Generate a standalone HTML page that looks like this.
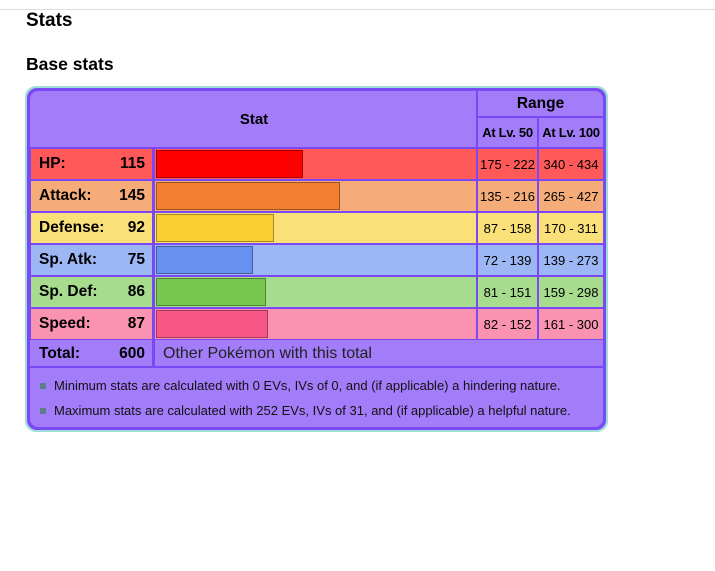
<!DOCTYPE html>
<html><head><meta charset="utf-8"><style>
*{margin:0;padding:0;box-sizing:border-box}
body{width:715px;height:571px;background:#fff;font-family:"Liberation Sans",Arial,sans-serif;position:relative;overflow:hidden;color:#000}
.a{position:absolute}
.c{position:absolute;display:flex;align-items:center}
.b{font-weight:bold}
.r{font-size:13px}
.l{font-size:15.5px}
</style></head><body>
<div class="a" style="left:0;top:9px;width:715px;height:1px;background:#ddd"></div>
<div class="a b" style="left:26px;top:10px;font-size:19px">Stats</div>
<div class="a b" style="left:26px;top:54px;font-size:17.5px">Base stats</div>

<div class="a" style="left:25px;top:86px;width:583px;height:346px;border-radius:11px;background:#a0dcd8"></div>
<div class="a" style="left:27px;top:88px;width:579px;height:342px;border-radius:10px;background:#7a48f5"></div>
<div class="a" style="left:30px;top:91px;width:573px;height:336px;border-radius:8px;background:#a37cf9"></div>

<div class="a" style="left:476px;top:89px;width:2px;height:59px;background:#7a48f5"></div>
<div class="a" style="left:478px;top:116px;width:127px;height:2px;background:#7a48f5"></div>
<div class="a" style="left:537px;top:118px;width:2px;height:30px;background:#7a48f5"></div>
<div class="c b" style="left:30px;top:91px;width:446px;height:56px;justify-content:center;font-size:15px;padding-left:2px">Stat</div>
<div class="c b" style="left:478px;top:91px;width:125px;height:25px;justify-content:center;font-size:15.5px">Range</div>
<div class="c b" style="left:478px;top:118px;width:59px;height:29px;justify-content:center;font-size:13px;letter-spacing:-0.3px">At Lv. 50</div>
<div class="c b" style="left:539px;top:118px;width:64px;height:29px;justify-content:center;font-size:13px;letter-spacing:-0.3px">At Lv. 100</div>

<div class="a" style="left:28px;top:147px;width:577px;height:193px;background:#7a48f5"></div>

<div class="a" style="left:31px;top:149px;width:121px;height:30px;background:#ff5959"></div>
<div class="a" style="left:155px;top:149px;width:321px;height:30px;background:#ff5959"></div>
<div class="a" style="left:478px;top:149px;width:59px;height:30px;background:#ff5959"></div>
<div class="a" style="left:539px;top:149px;width:64px;height:30px;background:#ff5959"></div>
<div class="a" style="left:156px;top:150px;width:147px;height:28px;background:#f00;border:1px solid #a00"></div>

<div class="a" style="left:31px;top:181px;width:121px;height:30px;background:#f5ac78"></div>
<div class="a" style="left:155px;top:181px;width:321px;height:30px;background:#f5ac78"></div>
<div class="a" style="left:478px;top:181px;width:59px;height:30px;background:#f5ac78"></div>
<div class="a" style="left:539px;top:181px;width:64px;height:30px;background:#f5ac78"></div>
<div class="a" style="left:156px;top:182px;width:184px;height:28px;background:#f08030;border:1px solid #9c531f"></div>

<div class="a" style="left:31px;top:213px;width:121px;height:30px;background:#fae078"></div>
<div class="a" style="left:155px;top:213px;width:321px;height:30px;background:#fae078"></div>
<div class="a" style="left:478px;top:213px;width:59px;height:30px;background:#fae078"></div>
<div class="a" style="left:539px;top:213px;width:64px;height:30px;background:#fae078"></div>
<div class="a" style="left:156px;top:214px;width:118px;height:28px;background:#f8d030;border:1px solid #a1871f"></div>

<div class="a" style="left:31px;top:245px;width:121px;height:30px;background:#9db7f5"></div>
<div class="a" style="left:155px;top:245px;width:321px;height:30px;background:#9db7f5"></div>
<div class="a" style="left:478px;top:245px;width:59px;height:30px;background:#9db7f5"></div>
<div class="a" style="left:539px;top:245px;width:64px;height:30px;background:#9db7f5"></div>
<div class="a" style="left:156px;top:246px;width:97px;height:28px;background:#6890f0;border:1px solid #445e9c"></div>

<div class="a" style="left:31px;top:277px;width:121px;height:30px;background:#a7db8d"></div>
<div class="a" style="left:155px;top:277px;width:321px;height:30px;background:#a7db8d"></div>
<div class="a" style="left:478px;top:277px;width:59px;height:30px;background:#a7db8d"></div>
<div class="a" style="left:539px;top:277px;width:64px;height:30px;background:#a7db8d"></div>
<div class="a" style="left:156px;top:278px;width:110px;height:28px;background:#78c850;border:1px solid #4e8234"></div>

<div class="a" style="left:31px;top:309px;width:121px;height:30px;background:#fa92b2"></div>
<div class="a" style="left:155px;top:309px;width:321px;height:30px;background:#fa92b2"></div>
<div class="a" style="left:478px;top:309px;width:59px;height:30px;background:#fa92b2"></div>
<div class="a" style="left:539px;top:309px;width:64px;height:30px;background:#fa92b2"></div>
<div class="a" style="left:156px;top:310px;width:112px;height:28px;background:#f85888;border:1px solid #a13959"></div>

<div class="c b l" style="left:39px;top:149px;height:30px">HP:</div>
<div class="c b l" style="left:39px;top:181px;height:30px">Attack:</div>
<div class="c b l" style="left:39px;top:213px;height:30px">Defense:</div>
<div class="c b l" style="left:39px;top:245px;height:30px">Sp. Atk:</div>
<div class="c b l" style="left:39px;top:277px;height:30px">Sp. Def:</div>
<div class="c b l" style="left:39px;top:309px;height:30px">Speed:</div>
<div class="c b l" style="left:39px;top:341px;height:26px">Total:</div>

<div class="c b l" style="left:90px;width:55px;justify-content:flex-end;top:149px;height:30px">115</div>
<div class="c b l" style="left:90px;width:55px;justify-content:flex-end;top:181px;height:30px">145</div>
<div class="c b l" style="left:90px;width:55px;justify-content:flex-end;top:213px;height:30px">92</div>
<div class="c b l" style="left:90px;width:55px;justify-content:flex-end;top:245px;height:30px">75</div>
<div class="c b l" style="left:90px;width:55px;justify-content:flex-end;top:277px;height:30px">86</div>
<div class="c b l" style="left:90px;width:55px;justify-content:flex-end;top:309px;height:30px">87</div>
<div class="c b l" style="left:90px;width:55px;justify-content:flex-end;top:341px;height:26px">600</div>

<div class="c r" style="left:478px;width:59px;justify-content:center;top:149px;height:30px">175 - 222</div>
<div class="c r" style="left:539px;width:64px;justify-content:center;top:149px;height:30px">340 - 434</div>
<div class="c r" style="left:478px;width:59px;justify-content:center;top:181px;height:30px">135 - 216</div>
<div class="c r" style="left:539px;width:64px;justify-content:center;top:181px;height:30px">265 - 427</div>
<div class="c r" style="left:478px;width:59px;justify-content:center;top:213px;height:30px">87 - 158</div>
<div class="c r" style="left:539px;width:64px;justify-content:center;top:213px;height:30px">170 - 311</div>
<div class="c r" style="left:478px;width:59px;justify-content:center;top:245px;height:30px">72 - 139</div>
<div class="c r" style="left:539px;width:64px;justify-content:center;top:245px;height:30px">139 - 273</div>
<div class="c r" style="left:478px;width:59px;justify-content:center;top:277px;height:30px">81 - 151</div>
<div class="c r" style="left:539px;width:64px;justify-content:center;top:277px;height:30px">159 - 298</div>
<div class="c r" style="left:478px;width:59px;justify-content:center;top:309px;height:30px">82 - 152</div>
<div class="c r" style="left:539px;width:64px;justify-content:center;top:309px;height:30px">161 - 300</div>

<div class="a" style="left:152px;top:340px;width:3px;height:28px;background:#7a48f5"></div>
<div class="a" style="left:28px;top:366px;width:577px;height:2px;background:#7a48f5"></div>
<div class="c" style="left:163px;top:341px;height:26px;font-size:16px;color:#222">Other Pokémon with this total</div>

<div class="a" style="left:40px;top:383px;width:6px;height:6px;background:#5c7d8c"></div>
<div class="a" style="left:54px;top:378px;font-size:13px;color:#111">Minimum stats are calculated with 0 EVs, IVs of 0, and (if applicable) a hindering nature.</div>
<div class="a" style="left:40px;top:408px;width:6px;height:6px;background:#5c7d8c"></div>
<div class="a" style="left:54px;top:403px;font-size:13px;color:#111">Maximum stats are calculated with 252 EVs, IVs of 31, and (if applicable) a helpful nature.</div>
</body></html>
